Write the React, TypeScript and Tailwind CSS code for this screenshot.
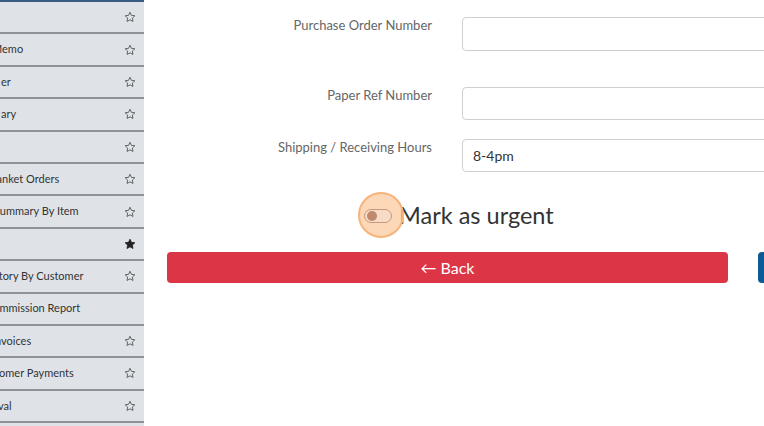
import React from "react";

const rows = [
  { text: "", ml: 0, star: "outline" },
  { text: "Memo", ml: -8, star: "outline" },
  { text: "er", ml: 1, star: "outline" },
  { text: "ary", ml: 1, star: "outline" },
  { text: "", ml: 0, star: "outline" },
  { text: "Blanket Orders", ml: -13, star: "outline" },
  { text: "Summary By Item", ml: -6, star: "outline" },
  { text: "", ml: 0, star: "filled" },
  { text: "History By Customer", ml: -17, star: "outline" },
  { text: "Commission Report", ml: -14, star: "none" },
  { text: "Invoices", ml: -8, star: "outline" },
  { text: "Customer Payments", ml: -23, star: "outline" },
  { text: "val", ml: -2, star: "outline" },
  { text: "", ml: 0, star: "none" },
];

const Star = ({ filled }: { filled: boolean }) => (
  <svg width="12" height="12" viewBox="0 0 24 24">
    <path
      d="M12 2.5l2.9 6.2 6.8.8-5 4.7 1.3 6.7L12 17.6l-6 3.3 1.3-6.7-5-4.7 6.8-.8z"
      fill={filled ? "#222" : "none"}
      stroke={filled ? "#222" : "#555"}
      strokeWidth="1.8"
      strokeLinejoin="round"
    />
  </svg>
);

const App = () => {
  return (
    <div
      className="w-[764px] h-[426px] flex overflow-hidden bg-white"
      style={{ fontFamily: "Lato, 'Noto Sans', sans-serif" }}
    >
      <div className="w-[144px] shrink-0 bg-[#dfe3e8] border-t-2 border-[#3b5b82] overflow-hidden">
        {rows.map((r, i) => (
          <div
            key={i}
            className="h-[32.4px] flex items-center justify-between border-b-2 border-[#8e9195] pr-[8px] overflow-hidden"
          >
            <span
              className="text-[11px] text-[#333] whitespace-nowrap"
              style={{ marginLeft: r.ml }}
            >
              {r.text}
            </span>
            {r.star !== "none" && <Star filled={r.star === "filled"} />}
          </div>
        ))}
      </div>

      <div className="flex-1 overflow-hidden pl-[23px] pt-[17px]">
        <div className="flex gap-[30px]">
          <label className="w-[265px] shrink-0 text-right text-[13px] text-[#666] leading-[16px]">
            Purchase Order Number
          </label>
          <input className="w-[600px] shrink-0 h-[34px] border border-[#cfcfcf] rounded-[4px]" />
        </div>
        <div className="flex gap-[30px] mt-[36px]">
          <label className="w-[265px] shrink-0 text-right text-[13px] text-[#666] leading-[16px]">
            Paper Ref Number
          </label>
          <input className="w-[600px] shrink-0 h-[33px] border border-[#cfcfcf] rounded-[4px]" />
        </div>
        <div className="flex gap-[30px] mt-[19px]">
          <label className="w-[265px] shrink-0 text-right text-[13px] text-[#666] leading-[16px]">
            Shipping / Receiving Hours
          </label>
          <div className="w-[600px] shrink-0 h-[33px] border border-[#cfcfcf] rounded-[4px] flex items-center pl-[10px] text-[14px] text-[#333]">
            8-4pm
          </div>
        </div>

        <div className="flex items-center mt-[20px] ml-[197px] h-[48px]">
          <div className="relative w-[28px] h-[14px] mr-[7px]">
            <div className="absolute left-[-6px] top-[-17px] w-[46px] h-[46px] rounded-full bg-[#fbc79a]/70 border-2 border-[#f7b37a]" />
            <div className="absolute inset-0 rounded-full border border-[#c9977a] bg-[#f6dcc8]" />
            <div className="absolute left-[3px] top-[2px] w-[10px] h-[10px] rounded-full bg-[#c08b6c]" />
          </div>
          <span className="text-[23.5px] text-[#333] leading-none">Mark as urgent</span>
        </div>

        <div className="flex gap-[30px] mt-[12px]">
          <button className="w-[561px] shrink-0 h-[31px] rounded-[4px] bg-[#dc3545] text-white text-[16px] flex items-center justify-center">
            ← Back
          </button>
          <button className="w-[300px] shrink-0 h-[31px] rounded-[4px] bg-[#0e5a94] text-white text-[16px]">
            Next
          </button>
        </div>
      </div>
    </div>
  );
};

export default App;
